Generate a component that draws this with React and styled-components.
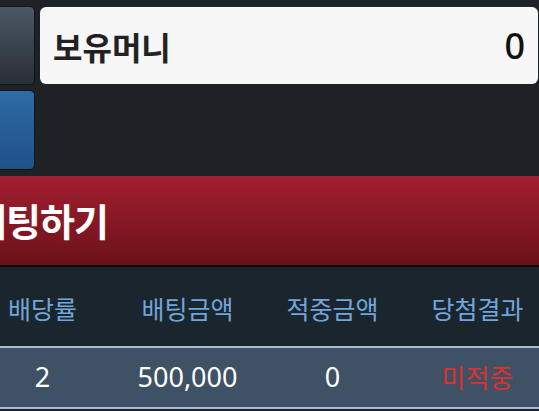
import React from "react";
import styled, { createGlobalStyle } from "styled-components";

const GlobalStyle = createGlobalStyle`
    html, body {
        margin: 0;
        padding: 0;
        background: #1e2227;
        overflow: hidden;
    }
    body {
        font-family: "Noto Sans CJK KR", "Noto Sans", sans-serif;
    }
    * {
        box-sizing: border-box;
    }
`;

const Page = styled.div`
    width: 539px;
    height: 411px;
    overflow: hidden;
    padding-top: 6px;
`;

const TopSection = styled.div`
    display: grid;
    grid-template-columns: 35px 1fr;
    column-gap: 5px;
    padding-right: 1px;
`;

const SideColumn = styled.div`
    display: flex;
    flex-direction: column;
    gap: 5px;
`;

const SideButton = styled.div`
    height: ${({ tall }) => (tall ? 80 : 79)}px;
    margin-left: -6px;
    border: 1px solid #101317;
    border-radius: 5px;
    background: ${({ variant }) =>
        variant === "blue"
            ? "linear-gradient(to bottom, #2e6ba6, #205088)"
            : "linear-gradient(to bottom, #4c5864, #272e36)"};
`;

const MoneyBox = styled.div`
    height: 77px;
    margin-top: 1px;
    background: #f7f7f8;
    border-radius: 6px;
    display: flex;
    align-items: center;
    justify-content: space-between;
    padding: 0 13px;
    color: #222;
    font-size: 32px;
    font-weight: 700;
`;

const MoneyValue = styled.span`
    font-family: "Noto Sans", sans-serif;
    font-weight: 500;
    font-size: 36px;
    color: #111;
`;

const BetBar = styled.div`
    margin-top: 6px;
    height: 91px;
    background: linear-gradient(to bottom, #a21f30, #6c1119);
    border-bottom: 2px solid #0b0b0c;
    display: flex;
    align-items: center;
`;

const BetTitle = styled.span`
    margin-left: -28px;
    margin-top: -2px;
    color: #fff;
    font-size: 38px;
    font-weight: 700;
    letter-spacing: -1px;
`;

const Table = styled.div`
    margin-left: -30px;
    width: 580px;
`;

const Row = styled.div`
    display: grid;
    grid-template-columns: repeat(4, 145px);
    align-items: center;
    height: ${({ head }) => (head ? 79 : 63)}px;
    background: ${({ head }) => (head ? "#1b252d" : "#3e5165")};
    border-top: ${({ head }) => (head ? "none" : "2px solid #a6bdd1")};
    border-bottom: ${({ head }) => (head ? "none" : "2px solid #a6bdd1")};
`;

const HeadCell = styled.div`
    text-align: center;
    color: #70a6da;
    font-size: 25px;
    font-weight: 400;
    margin-top: 2px;
`;

const Cell = styled.div`
    text-align: center;
    color: ${({ tone }) => (tone === "red" ? "#dd3131" : "#fff")};
    font-family: ${({ num }) => (num ? '"Noto Sans", sans-serif' : '"Noto Sans CJK KR", sans-serif')};
    font-size: ${({ num }) => (num ? 27 : 26)}px;
    margin-top: -3px;
`;

const headers = ["배당률", "배팅금액", "적중금액", "당첨결과"];

export default function App() {
    return (
        <Page>
            <GlobalStyle />
            <TopSection>
                <SideColumn>
                    <SideButton />
                    <SideButton variant="blue" tall />
                </SideColumn>
                <MoneyBox>
                    <span>보유머니</span>
                    <MoneyValue>0</MoneyValue>
                </MoneyBox>
            </TopSection>
            <BetBar>
                <BetTitle>베팅하기</BetTitle>
            </BetBar>
            <Table>
                <Row head>
                    {headers.map((h) => (
                        <HeadCell key={h}>{h}</HeadCell>
                    ))}
                </Row>
                <Row>
                    <Cell num>2</Cell>
                    <Cell num>500,000</Cell>
                    <Cell num>0</Cell>
                    <Cell tone="red">미적중</Cell>
                </Row>
            </Table>
        </Page>
    );
}
